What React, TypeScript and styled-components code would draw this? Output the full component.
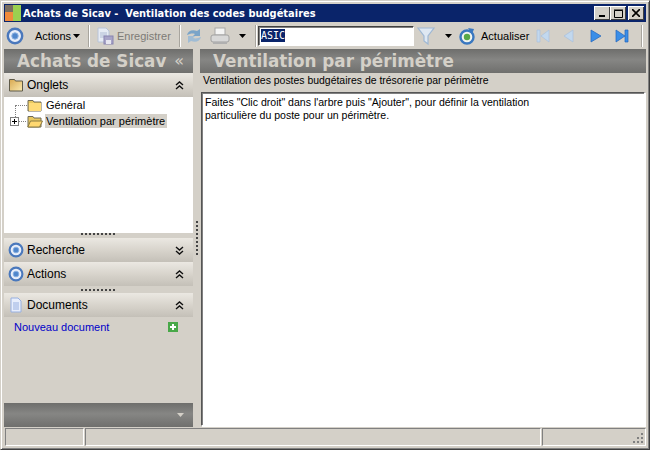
import * as React from 'react';
import styled, { createGlobalStyle } from 'styled-components';

const face = '#d4d0c8';

const Global = createGlobalStyle`
  html, body { margin: 0; padding: 0; background: ${face}; }
  * { box-sizing: border-box; }
`;

const Window = styled.div`
  width: 650px;
  height: 450px;
  display: flex;
  flex-direction: column;
  overflow: hidden;
  padding: 3px;
  background: ${face};
  border: 1px solid;
  border-color: #d4d0c8 #404040 #404040 #d4d0c8;
  box-shadow: inset 1px 1px 0 #fff, inset -1px -1px 0 #808080;
  font-family: "Liberation Sans", Arial, sans-serif;
  font-size: 11px;
  color: #000;
`;

const TitleBar = styled.div`
  height: 18px;
  flex: none;
  display: flex;
  align-items: center;
  background: #0a246a;
  color: #fff;
  font-family: "DejaVu Sans", sans-serif;
  font-weight: 700;
  font-size: 9.9px;
  white-space: pre;
`;

const TitleText = styled.span`
  margin-left: 2px;
  flex: 1;
`;

const WinButtons = styled.div`
  display: flex;
  margin-right: 2px;
`;

const WinButton = styled.div<{ $gap?: boolean }>`
  width: 16px;
  height: 14px;
  margin-left: ${p => (p.$gap ? 2 : 0)}px;
  background: ${face};
  box-shadow: inset 1px 1px 0 #fff, inset -1px -1px 0 #404040;
  display: flex;
  align-items: center;
  justify-content: center;
`;

const Toolbar = styled.div`
  height: 27px;
  flex: none;
  display: flex;
  align-items: center;
  padding-left: 2px;
`;

const ToolLabel = styled.span<{ $disabled?: boolean; $ml: number; $w: number }>`
  color: ${p => (p.$disabled ? '#7d7b76' : '#000')};
  margin-left: ${p => p.$ml}px;
  width: ${p => p.$w}px;
  flex: none;
  white-space: nowrap;
`;

const Separator = styled.div<{ $left: number; $right: number }>`
  width: 2px;
  height: 22px;
  flex: none;
  margin: 0 ${p => p.$right}px 0 ${p => p.$left}px;
  background: linear-gradient(to right, #a8a59e 50%, #fff 50%);
`;

const SearchInput = styled.div`
  width: 156px;
  height: 20px;
  flex: none;
  background: #fff;
  border: 1px solid;
  border-color: #404040 #fff #fff #404040;
  box-shadow: inset 1px 1px 0 #808080;
  padding: 2px 0 0 2px;
  font-family: "DejaVu Sans Mono", "Liberation Mono", monospace;
  font-size: 10px;
  line-height: 13px;
`;

const Selected = styled.span`
  background: #0a246a;
  color: #fff;
  display: inline-block;
`;

const Main = styled.div`
  flex: 1;
  display: flex;
  min-height: 0;
`;

const Left = styled.div`
  width: 189px;
  flex: none;
  display: flex;
  flex-direction: column;
`;

const Splitter = styled.div`
  width: 7px;
  flex: none;
  display: flex;
  align-items: center;
  justify-content: center;
`;

const VDots = styled.div`
  width: 2px;
  height: 34px;
  background: repeating-linear-gradient(to bottom, #444 0 2px, transparent 2px 4px);
`;

const Right = styled.div`
  flex: 1;
  display: flex;
  flex-direction: column;
  min-width: 0;
`;

const GrayHeader = styled.div`
  height: 24px;
  flex: none;
  display: flex;
  align-items: center;
  justify-content: space-between;
  background: linear-gradient(to bottom, #6e6e6c 0%, #868684 45%, #6f6f6d 100%);
  color: #d4d0c8;
  font-family: Verdana, "DejaVu Sans", sans-serif;
  font-weight: 700;
  font-size: 16.8px;
  padding: 0 9px 0 13px;
  white-space: nowrap;
`;

const BigChevron = styled.span`
  font-size: 16px;
  font-weight: 400;
  line-height: 20px;
`;

const SectionHead = styled.div`
  height: 24px;
  flex: none;
  display: flex;
  align-items: center;
  padding: 0 9px 0 4px;
  background: linear-gradient(to bottom, #ebe8e2, #d6d2ca 55%, #c4c0b8);
  font-size: 12px;
  gap: 3px;
`;

const SectionTitle = styled.span`
  flex: 1;
`;

const Tree = styled.div`
  height: 136px;
  flex: none;
  background: #fff;
  padding: 0 0 0 6px;
  position: relative;
`;

const TreeRow = styled.div<{ $indent?: number }>`
  height: 16px;
  display: flex;
  align-items: center;
  padding-left: ${p => p.$indent ?? 0}px;
`;

const TreeLine = styled.div`
  position: absolute;
  left: 11px;
  top: 8px;
  width: 12px;
  height: 12px;
  border-left: 1px dotted #808080;
  border-top: 1px dotted #808080;
`;

const TreeLabel = styled.span<{ $selected?: boolean }>`
  background: ${p => (p.$selected ? face : 'transparent')};
  padding: 1px 2px 1px 1px;
  margin-left: 2px;
  white-space: nowrap;
`;

const HDots = styled.div<{ $h: number; $pb?: number }>`
  height: ${p => p.$h}px;
  padding-bottom: ${p => p.$pb ?? 0}px;
  flex: none;
  display: flex;
  justify-content: center;
  align-items: center;
  &::after {
    content: '';
    width: 35px;
    height: 2px;
    background: repeating-linear-gradient(to right, #444 0 2px, transparent 2px 4px);
  }
`;

const DocLink = styled.div`
  height: 20px;
  flex: none;
  display: flex;
  align-items: center;
  justify-content: space-between;
  padding: 0 15px 0 10px;
  color: #0000c8;
`;

const Spacer = styled.div`
  flex: 1;
`;

const Subtitle = styled.div`
  height: 19px;
  flex: none;
  padding: 1px 0 0 3px;
  font-size: 10.45px;
  line-height: 13px;
  white-space: nowrap;
`;

const Content = styled.div`
  flex: 1;
  margin: 0 1px 1px 1px;
  background: #fff;
  border: 1px solid;
  border-color: #555 #fff #fff #555;
  box-shadow: 1px 1px 0 #fff, inset 1px 1px 0 #808080;
  padding: 3px 0 0 3px;
  font-size: 10.55px;
  line-height: 13px;
`;

const StatusBar = styled.div`
  height: 18px;
  flex: none;
  display: flex;
  margin-top: 1px;
`;

const StatusCell = styled.div<{ $w?: number }>`
  width: ${p => (p.$w ? `${p.$w}px` : 'auto')};
  flex: ${p => (p.$w ? 'none' : 1)};
  border: 1px solid;
  border-color: #808080 #fff #fff #808080;
  margin-left: 1px;
  position: relative;
`;

const Grip = styled.svg`
  position: absolute;
  right: 1px;
  bottom: 1px;
`;

const Target = ({ size = 18 }: { size?: number }) => (
  <svg width={size} height={size} viewBox="0 0 18 18" style={{ flex: 'none' }}>
    <circle cx="9" cy="9" r="7.2" fill="#e8eefa" stroke="#4a78bc" strokeWidth="2.4" />
    <circle cx="9" cy="9" r="3.2" fill="#4f86cc" stroke="#8ab0e0" />
  </svg>
);

const Folder = ({ open }: { open?: boolean }) => (
  <svg width="16" height="13" viewBox="0 0 16 13" style={{ flex: 'none' }}>
    <path d="M1 1.500h5l1 1.500h7v9H1z" fill="#e8c860" stroke="#6e6a58" />
    {open
      ? <path d="M3.500 6h12l-3 6H.8z" fill="#ffd870" stroke="#8a7a40" />
      : <path d="M2 4h12v8H2z" fill="#ffdc78" />}
  </svg>
);

const SectionFolder = () => (
  <svg width="16" height="16" viewBox="0 0 16 16" style={{ flex: 'none' }}>
    <defs>
      <linearGradient id="sf" x1="0" y1="0" x2="1" y2="1">
        <stop offset="0" stopColor="#d8a850" />
        <stop offset="1" stopColor="#fbeab0" />
      </linearGradient>
    </defs>
    <path d="M1.500 2.500h5l1 1.500h7v10h-13z" fill="url(#sf)" stroke="#5e5a48" />
  </svg>
);

const DoubleChevron = ({ up }: { up?: boolean }) => (
  <svg width="9" height="9" viewBox="0 0 9 9" style={{ flex: 'none' }}>
    <path
      d={up ? 'M1 4l3.500-3L8 4M1 8l3.500-3L8 8' : 'M1 1l3.500 3L8 1M1 5l3.500 3L8 5'}
      fill="none"
      stroke="#111"
      strokeWidth="1.4"
    />
  </svg>
);

const Caret = ({ ml = 0, color = '#000' }: { ml?: number; color?: string }) => (
  <svg width="7" height="4" viewBox="0 0 7 4" style={{ flex: 'none', marginLeft: ml }}>
    <path d="M0 0h7L3.500 4z" fill={color} />
  </svg>
);

const Nav = ({ d, fill, ml }: { d: string; fill: string; ml: number }) => (
  <svg width="16" height="16" viewBox="0 0 16 16" style={{ flex: 'none', marginLeft: ml }}>
    <path d={d} fill={fill} stroke={fill === '#3a8ee8' ? '#2266bb' : '#a9c0dc'} strokeWidth="0.7" />
  </svg>
);

export default function App() {
  return (
    <>
      <Global />
      <Window>
        <TitleBar>
          <svg width="16" height="16" viewBox="0 0 16 16" style={{ flex: 'none', marginLeft: 1 }}>
            <rect width="8" height="7" fill="#7a6e60" />
            <rect x="8" width="8" height="16" fill="#9ad050" />
            <rect y="7" width="8" height="9" fill="#f08a3c" />
          </svg>
          <TitleText>{'Achats de Sicav -  Ventilation des codes budgétaires'}</TitleText>
          <WinButtons>
            <WinButton>
              <svg width="8" height="8"><rect x="1" y="6" width="6" height="2" fill="#000" /></svg>
            </WinButton>
            <WinButton>
              <svg width="9" height="9"><path d="M.5 1.500h8v7h-8zM0 1h9" fill="none" stroke="#000" /></svg>
            </WinButton>
            <WinButton $gap>
              <svg width="8" height="8"><path d="M0 0l8 8M8 0l-8 8" stroke="#000" strokeWidth="1.6" /></svg>
            </WinButton>
          </WinButtons>
        </TitleBar>

        <Toolbar>
          <Target />
          <ToolLabel $ml={11} $w={36}>Actions</ToolLabel>
          <Caret ml={2} />
          <Separator $left={8} $right={6} />
          <svg width="18" height="18" viewBox="0 0 18 18" style={{ flex: 'none' }}>
            <path d="M2 1h8l3 3v11H2z" fill="#e6ebf4" stroke="#b8c4d8" />
            <path d="M4 6h7M4 8h7M4 10h5" stroke="#b0bcd4" />
            <rect x="8" y="9" width="9" height="8" fill="#a8a4c8" stroke="#8884b0" />
            <rect x="10" y="13" width="5" height="4" fill="#e6e6f0" />
          </svg>
          <ToolLabel $disabled $ml={3} $w={53}>Enregistrer</ToolLabel>
          <Separator $left={9} $right={4} />
          <svg width="18" height="18" viewBox="0 0 18 18" style={{ flex: 'none' }}>
            <path d="M2 8c1-4 5-6 10-4l3-2v7H8l2-2c-3-1-5 0-8 1z" fill="#7aa4c8" />
            <path d="M16 10c-1 4-5 6-10 4l-3 2V9h7l-2 2c3 1 5 0 8-1z" fill="#a0bcd4" />
          </svg>
          <svg width="20" height="18" viewBox="0 0 20 18" style={{ flex: 'none', marginLeft: 7 }}>
            <rect x="5" y="1" width="10" height="7" fill="#f4f4f4" stroke="#a8a8a8" />
            <rect x="1" y="8" width="18" height="7" rx="2" fill="#d8d8d8" stroke="#a0a0a0" />
            <rect x="3" y="15" width="14" height="2" fill="#b0b0b0" />
          </svg>
          <Caret ml={9} />
          <Separator $left={9} $right={1} />
          <SearchInput><Selected>ASIC</Selected></SearchInput>
          <svg width="18" height="20" viewBox="0 0 18 20" style={{ flex: 'none', marginLeft: 3 }}>
            <path d="M1 2h16l-6 8v8l-4-3v-5z" fill="#dfe8f2" stroke="#9fb8d4" strokeWidth="1.2" />
          </svg>
          <Caret ml={10} />
          <svg width="18" height="18" viewBox="0 0 18 18" style={{ flex: 'none', marginLeft: 6 }}>
            <circle cx="9" cy="10" r="6.500" fill="#f0f4f0" stroke="#3a78c0" strokeWidth="2.4" />
            <circle cx="9" cy="10" r="3.200" fill="#58a848" />
            <path d="M10 1l6 1-2 5z" fill="#3a78c0" />
          </svg>
          <ToolLabel $ml={5} $w={47}>Actualiser</ToolLabel>
          <Nav d="M2 2h3v12H2zM14 2v12L6 8z" fill="#c2d8ee" ml={7} />
          <Nav d="M13 2v12L4 8z" fill="#c2d8ee" ml={9} />
          <Nav d="M3 2v12l10-6z" fill="#3a8ee8" ml={12} />
          <Nav d="M2 2v12l9-6zM11 2h3v12h-3z" fill="#3a8ee8" ml={10} />
          <Separator $left={11} $right={0} />
        </Toolbar>

        <Main>
          <Left>
            <GrayHeader>
              Achats de Sicav
              <BigChevron>«</BigChevron>
            </GrayHeader>
            <SectionHead>
              <SectionFolder />
              <SectionTitle>Onglets</SectionTitle>
              <DoubleChevron up />
            </SectionHead>
            <Tree>
              <TreeLine />
              <TreeRow $indent={17} style={{ position: 'relative' }}><Folder /><TreeLabel>Général</TreeLabel></TreeRow>
              <TreeRow>
                <svg width="17" height="9" viewBox="0 0 17 9" style={{ flex: 'none', position: 'relative' }}>
                  <rect x=".5" y=".5" width="8" height="8" fill="#fff" stroke="#808080" />
                  <path d="M2 4.500h5M4.500 2v5" stroke="#000" />
                  <path d="M9 4.500h8" stroke="#808080" strokeDasharray="1 1" />
                </svg>
                <Folder open />
                <TreeLabel $selected>Ventilation par périmètre</TreeLabel>
              </TreeRow>
            </Tree>
            <HDots $h={5} $pb={3} />
            <SectionHead>
              <Target size={16} />
              <SectionTitle>Recherche</SectionTitle>
              <DoubleChevron />
            </SectionHead>
            <SectionHead>
              <Target size={16} />
              <SectionTitle>Actions</SectionTitle>
              <DoubleChevron up />
            </SectionHead>
            <HDots $h={7} />
            <SectionHead>
              <svg width="16" height="16" viewBox="0 0 16 16" style={{ flex: 'none' }}>
                <path d="M3 1h7l3 3v11H3z" fill="#e8eefc" stroke="#98b0e0" />
                <path d="M5 6h6M5 8h6M5 10h6M5 12h6" stroke="#98b0e0" />
              </svg>
              <SectionTitle>Documents</SectionTitle>
              <DoubleChevron up />
            </SectionHead>
            <DocLink>
              Nouveau document
              <svg width="10" height="10" viewBox="0 0 10 10">
                <rect width="10" height="10" fill="#48a848" />
                <path d="M2 5h6M5 2v6" stroke="#fff" strokeWidth="2" />
              </svg>
            </DocLink>
            <Spacer />
            <GrayHeader>
              <span />
              <Caret color="#d4d0c8" />
            </GrayHeader>
          </Left>
          <Splitter><VDots /></Splitter>
          <Right>
            <GrayHeader>Ventilation par périmètre</GrayHeader>
            <Subtitle>Ventilation des postes budgétaires de trésorerie par périmètre</Subtitle>
            <Content>
              Faites "Clic droit" dans l'arbre puis "Ajouter", pour définir la ventilation
              <br />
              particulière du poste pour un périmètre.
            </Content>
          </Right>
        </Main>

        <StatusBar>
          <StatusCell $w={79} />
          <StatusCell $w={456} />
          <StatusCell>
            <Grip width="12" height="12" viewBox="0 0 12 12">
              <path d="M9 1h2v2H9zM5 5h2v2H5zM9 5h2v2H9zM1 9h2v2H1zM5 9h2v2H5zM9 9h2v2H9z" fill="#808080" />
            </Grip>
          </StatusCell>
        </StatusBar>
      </Window>
    </>
  );
}
